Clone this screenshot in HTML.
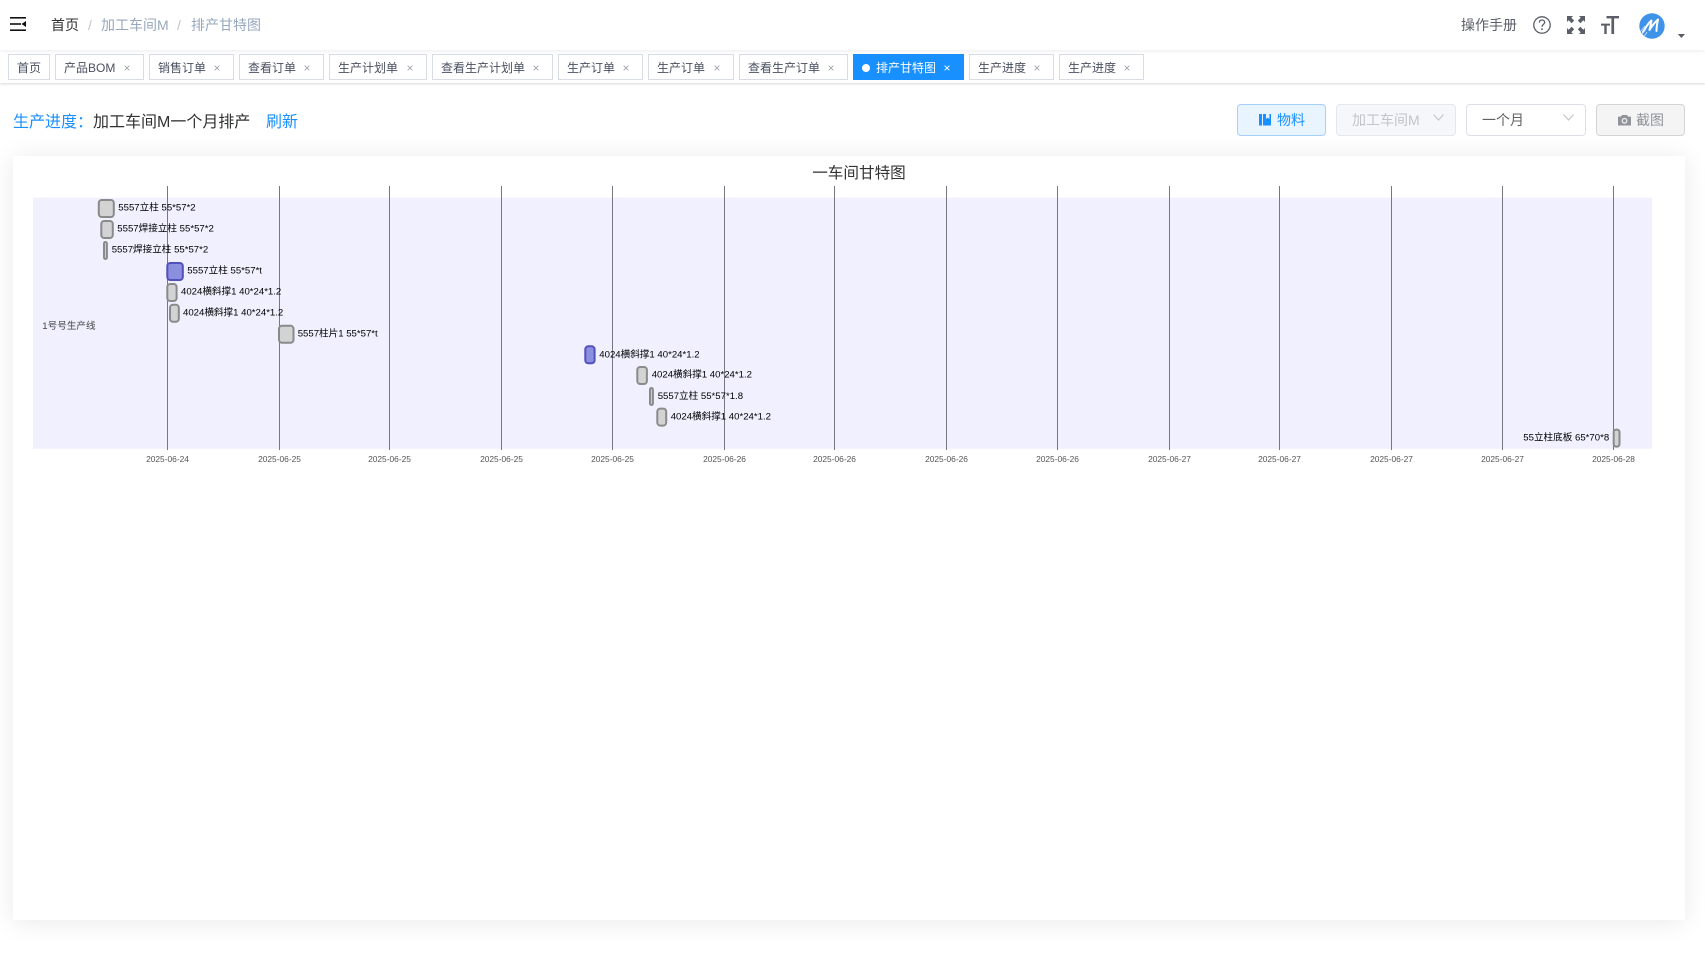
<!DOCTYPE html>
<html lang="zh-CN">
<head>
<meta charset="utf-8">
<title>排产甘特图</title>
<style>
html,body{margin:0;padding:0;background:#fff;}
body{width:1705px;height:954px;overflow:hidden;position:relative;font-family:"Liberation Sans","Noto Sans CJK SC",sans-serif;}
.a{position:absolute;}
.t{position:absolute;white-space:nowrap;line-height:20px;height:20px;}
#nav{left:0;top:0;width:1705px;height:50px;background:#fff;box-shadow:0 1px 4px rgba(0,21,41,.08);z-index:3;}
#bar{left:0;top:50px;width:1705px;height:32.5px;background:#fff;border-bottom:0;box-shadow:0 1px 3px 0 rgba(0,0,0,.14),0 0 3px 0 rgba(0,0,0,.04);z-index:2;}
.tag{position:absolute;top:54px;height:26px;box-sizing:border-box;border:1px solid #d8dce5;background:#fff;z-index:4;}
.tl{position:absolute;top:58px;font-size:12px;color:#495060;line-height:20px;white-space:nowrap;z-index:5;}
.x{position:absolute;top:58px;width:12px;margin-left:-6px;text-align:center;font-size:12px;line-height:20px;color:#a0a4ac;z-index:5;}
.btn{position:absolute;top:104px;height:32px;box-sizing:border-box;border-radius:4px;}
#card{left:13px;top:156px;width:1672px;height:764px;background:#fff;box-shadow:0 2px 24px 0 rgba(0,0,0,.09);}
svg{position:absolute;overflow:visible;}
.tk{font-size:8.4px;fill:#555;text-anchor:middle;font-family:"Liberation Sans","Noto Sans CJK SC",sans-serif;}
.lb{font-size:9.6px;fill:#000;font-family:"Liberation Sans","Noto Sans CJK SC",sans-serif;}
</style>
</head>
<body>
<div id="nav" class="a"></div>
<div id="bar" class="a"></div>

<svg style="left:0;top:0;z-index:6" width="40" height="50" viewBox="0 0 40 50">
  <rect x="10" y="17" width="16" height="1.6" fill="#111"/>
  <rect x="10" y="23.2" width="11" height="1.6" fill="#111"/>
  <rect x="10" y="29.4" width="16" height="1.6" fill="#111"/>
  <path d="M26 21 L21.5 24 L26 27 Z" fill="#111"/>
</svg>
<div class="t" style="left:51px;top:15px;font-size:14px;color:#303133;z-index:6">首页</div>
<div class="t" style="left:88px;top:15px;font-size:14px;color:#c0c4cc;z-index:6">/</div>
<div class="t" style="left:101px;top:15px;font-size:14px;color:#97a8be;z-index:6">加工车间M</div>
<div class="t" style="left:177px;top:15px;font-size:14px;color:#c0c4cc;z-index:6">/</div>
<div class="t" style="left:191px;top:15px;font-size:14px;color:#97a8be;z-index:6">排产甘特图</div>

<div class="t" style="left:1461px;top:15px;font-size:14px;color:#5a5e66;z-index:6">操作手册</div>
<svg style="left:1530px;top:10px;z-index:6" width="24" height="30" viewBox="0 0 24 30">
  <circle cx="12" cy="15" r="8.2" fill="none" stroke="#5a5e66" stroke-width="1.3"/>
  <path d="M9.3 12.6 C9.4 10.8 10.6 10 12 10 C13.6 10 14.7 11 14.7 12.4 C14.7 14.3 12 14.5 12 16.8" fill="none" stroke="#5a5e66" stroke-width="1.3"/>
  <circle cx="12" cy="19.2" r="0.9" fill="#5a5e66"/>
</svg>
<svg style="left:1567px;top:16px;z-index:6" width="18" height="18" viewBox="0 0 18 18" fill="#5a5e66">
  <path d="M0 0H6L4.3 1.7 7.2 4.6 4.6 7.2 1.7 4.3 0 6Z"/>
  <path d="M18 0H12L13.7 1.7 10.8 4.6 13.4 7.2 16.3 4.3 18 6Z"/>
  <path d="M0 18H6L4.3 16.3 7.2 13.4 4.6 10.8 1.7 13.7 0 12Z"/>
  <path d="M18 18H12L13.7 16.3 10.8 13.4 13.4 10.8 16.3 13.7 18 12Z"/>
</svg>
<svg style="left:1601px;top:16px;z-index:6" width="18" height="18" viewBox="0 0 18 18" fill="#5a5e66">
  <path d="M5.5 0H18V2.4H13.1V18H10.4V2.4H5.5Z"/>
  <path d="M0 7.6H9V9.6H5.7V18H3.3V9.6H0Z"/>
</svg>
<svg style="left:1638px;top:12px;z-index:6" width="28" height="28" viewBox="0 0 28 28">
  <circle cx="14" cy="14" r="12.7" fill="#3e93e8"/>
  <path d="M5 20 C8 15 11 10 13.5 8.5 C13 12 12 15 11.5 18 C14 14 17 10 20 7.5 C19 12 18.5 15 18.5 19" fill="none" stroke="#fff" stroke-width="2" stroke-linecap="round" stroke-linejoin="round"/>
  <path d="M2 20 L7 14 M3.5 23 L8 17 M6 25 L9 20" stroke="#cfe4fa" stroke-width="0.8"/>
</svg>
<svg style="left:1677px;top:33px;z-index:6" width="9" height="6" viewBox="0 0 9 6"><path d="M0.8 1H8L4.4 5Z" fill="#5a5e66"/></svg>

<div class="tag" style="left:8px;width:42px"></div><div class="tl" style="left:17px">首页</div>
<div class="tag" style="left:55px;width:89px"></div><div class="tl" style="left:64px">产品BOM</div><div class="x" style="left:127px">×</div>
<div class="tag" style="left:149px;width:85px"></div><div class="tl" style="left:158px">销售订单</div><div class="x" style="left:217px">×</div>
<div class="tag" style="left:239px;width:85px"></div><div class="tl" style="left:248px">查看订单</div><div class="x" style="left:307px">×</div>
<div class="tag" style="left:329px;width:98px"></div><div class="tl" style="left:338px">生产计划单</div><div class="x" style="left:410px">×</div>
<div class="tag" style="left:432px;width:121px"></div><div class="tl" style="left:441px">查看生产计划单</div><div class="x" style="left:536px">×</div>
<div class="tag" style="left:558px;width:85px"></div><div class="tl" style="left:567px">生产订单</div><div class="x" style="left:626px">×</div>
<div class="tag" style="left:648px;width:86px"></div><div class="tl" style="left:657px">生产订单</div><div class="x" style="left:717px">×</div>
<div class="tag" style="left:739px;width:109px"></div><div class="tl" style="left:748px">查看生产订单</div><div class="x" style="left:831px">×</div>
<div class="tag" style="left:853px;width:111px;background:#1890ff;border-color:#1890ff"></div>
<div class="a" style="left:862px;top:64px;width:8px;height:8px;border-radius:50%;background:#fff;z-index:5"></div>
<div class="tl" style="left:876px;color:#fff">排产甘特图</div><div class="x" style="left:947px;color:#fff">×</div>
<div class="tag" style="left:969px;width:85px"></div><div class="tl" style="left:978px">生产进度</div><div class="x" style="left:1037px">×</div>
<div class="tag" style="left:1059px;width:85px"></div><div class="tl" style="left:1068px">生产进度</div><div class="x" style="left:1127px">×</div>

<div class="t" style="left:13px;top:113px;font-size:16px;color:#1890ff">生产进度：</div>
<div class="t" style="left:93px;top:113px;font-size:16px;color:#303133">加工车间M一个月排产</div>
<div class="t" style="left:266px;top:113px;font-size:16px;color:#1890ff">刷新</div>

<div id="card" class="a"></div>

<div class="btn" style="left:1237px;width:89px;background:#e8f4ff;border:1px solid #a3d0fd"></div>
<svg style="left:1259px;top:114px" width="12" height="12" viewBox="0 0 12 12"><path d="M0 0H3V11.5H0Z M4 0H7V5L8.7 3.6 10.4 5V0H12V11.5H4Z" fill="#1890ff"/></svg>
<div class="t" style="left:1277px;top:110px;font-size:14px;color:#1890ff">物料</div>

<div class="btn" style="left:1336px;width:120px;background:#f5f7fa;border:1px solid #e4e7ed"></div>
<div class="t" style="left:1352px;top:110px;font-size:14px;color:#c0c4cc">加工车间M</div>
<svg style="left:1432px;top:113px" width="13" height="9" viewBox="0 0 13 9"><path d="M1.5 1.5L6.5 7L11.5 1.5" fill="none" stroke="#c0c4cc" stroke-width="1.1"/></svg>

<div class="btn" style="left:1466px;width:120px;background:#fff;border:1px solid #dcdfe6"></div>
<div class="t" style="left:1482px;top:110px;font-size:14px;color:#606266">一个月</div>
<svg style="left:1562px;top:113px" width="13" height="9" viewBox="0 0 13 9"><path d="M1.5 1.5L6.5 7L11.5 1.5" fill="none" stroke="#c0c4cc" stroke-width="1.1"/></svg>

<div class="btn" style="left:1596px;width:89px;background:#f4f4f5;border:1px solid #d3d4d6"></div>
<svg style="left:1618px;top:114px" width="13" height="12" viewBox="0 0 13 12"><path d="M4 1H9L10 2.6H13V11.5H0V2.6H3Z" fill="#909399"/><circle cx="6.5" cy="6.8" r="2.9" fill="#f4f4f5"/><circle cx="6.5" cy="6.8" r="1.7" fill="#909399"/></svg>
<div class="t" style="left:1636px;top:110px;font-size:14px;color:#909399">截图</div>

<div class="t" style="left:811px;top:162px;width:96px;text-align:center;font-size:15.6px;color:#333;padding-top:2px">一车间甘特图</div>

<svg style="left:0;top:0" width="1705" height="954" viewBox="0 0 1705 954">
  <rect x="33" y="197.7" width="1619" height="251" fill="#f0f0ff"/>
  <g stroke="#77777f" stroke-width="1">
    <line x1="167.5" y1="186" x2="167.5" y2="450"/>
    <line x1="279.5" y1="186" x2="279.5" y2="450"/>
    <line x1="389.5" y1="186" x2="389.5" y2="450"/>
    <line x1="501.5" y1="186" x2="501.5" y2="450"/>
    <line x1="612.5" y1="186" x2="612.5" y2="450"/>
    <line x1="724.5" y1="186" x2="724.5" y2="450"/>
    <line x1="834.5" y1="186" x2="834.5" y2="450"/>
    <line x1="946.5" y1="186" x2="946.5" y2="450"/>
    <line x1="1057.5" y1="186" x2="1057.5" y2="450"/>
    <line x1="1169.5" y1="186" x2="1169.5" y2="450"/>
    <line x1="1279.5" y1="186" x2="1279.5" y2="450"/>
    <line x1="1391.5" y1="186" x2="1391.5" y2="450"/>
    <line x1="1502.5" y1="186" x2="1502.5" y2="450"/>
    <line x1="1613.5" y1="186" x2="1613.5" y2="450"/>
  </g>
  <g class="bars" stroke="#8a8a8a" stroke-width="2" fill="#d3d3d3">
    <rect x="98.8" y="200" width="15" height="17" rx="3"/>
    <rect x="101.3" y="221" width="11.5" height="17" rx="3"/>
    <rect x="104" y="242" width="2.9" height="17" rx="1.4"/>
    <rect x="167.3" y="263" width="15.5" height="17" rx="3" fill="#8a90dd" stroke="#534fbc"/>
    <rect x="167.3" y="284" width="9.3" height="17" rx="3"/>
    <rect x="170" y="304.8" width="8.8" height="17" rx="3"/>
    <rect x="279" y="325.8" width="14.5" height="17" rx="3"/>
    <rect x="585.3" y="346.3" width="9.3" height="17" rx="3" fill="#8a90dd" stroke="#534fbc"/>
    <rect x="637.3" y="367" width="9.6" height="17" rx="3"/>
    <rect x="650" y="388" width="2.9" height="17" rx="1.4"/>
    <rect x="657.3" y="408.6" width="8.9" height="17" rx="3"/>
    <rect x="1613.7" y="429.6" width="5.8" height="17" rx="2.5"/>
  </g>
  <g class="texts">
    <text class="lb" x="118.3" y="210.7">5557立柱 55*57*2</text>
    <text class="lb" x="117.3" y="231.7">5557焊接立柱 55*57*2</text>
    <text class="lb" x="111.7" y="252.7">5557焊接立柱 55*57*2</text>
    <text class="lb" x="187.3" y="273.7">5557立柱 55*57*t</text>
    <text class="lb" x="181" y="294.7">4024横斜撑1 40*24*1.2</text>
    <text class="lb" x="183" y="315.7">4024横斜撑1 40*24*1.2</text>
    <text class="lb" x="297.7" y="336.7">5557柱片1 55*57*t</text>
    <text class="lb" x="599.3" y="357.7">4024横斜撑1 40*24*1.2</text>
    <text class="lb" x="651.7" y="377.7">4024横斜撑1 40*24*1.2</text>
    <text class="lb" x="657.7" y="399">5557立柱 55*57*1.8</text>
    <text class="lb" x="670.7" y="419.7">4024横斜撑1 40*24*1.2</text>
    <text class="lb" x="1523.3" y="440.7">55立柱底板 65*70*8</text>
    <text class="lb" x="42.3" y="329" style="fill:#444">1号号生产线</text>
  </g>
  <g>
    <text class="tk" x="167.5" y="462">2025-06-24</text>
    <text class="tk" x="279.5" y="462">2025-06-25</text>
    <text class="tk" x="389.5" y="462">2025-06-25</text>
    <text class="tk" x="501.5" y="462">2025-06-25</text>
    <text class="tk" x="612.5" y="462">2025-06-25</text>
    <text class="tk" x="724.5" y="462">2025-06-26</text>
    <text class="tk" x="834.5" y="462">2025-06-26</text>
    <text class="tk" x="946.5" y="462">2025-06-26</text>
    <text class="tk" x="1057.5" y="462">2025-06-26</text>
    <text class="tk" x="1169.5" y="462">2025-06-27</text>
    <text class="tk" x="1279.5" y="462">2025-06-27</text>
    <text class="tk" x="1391.5" y="462">2025-06-27</text>
    <text class="tk" x="1502.5" y="462">2025-06-27</text>
    <text class="tk" x="1613.5" y="462">2025-06-28</text>
  </g>
</svg>
</body>
</html>
